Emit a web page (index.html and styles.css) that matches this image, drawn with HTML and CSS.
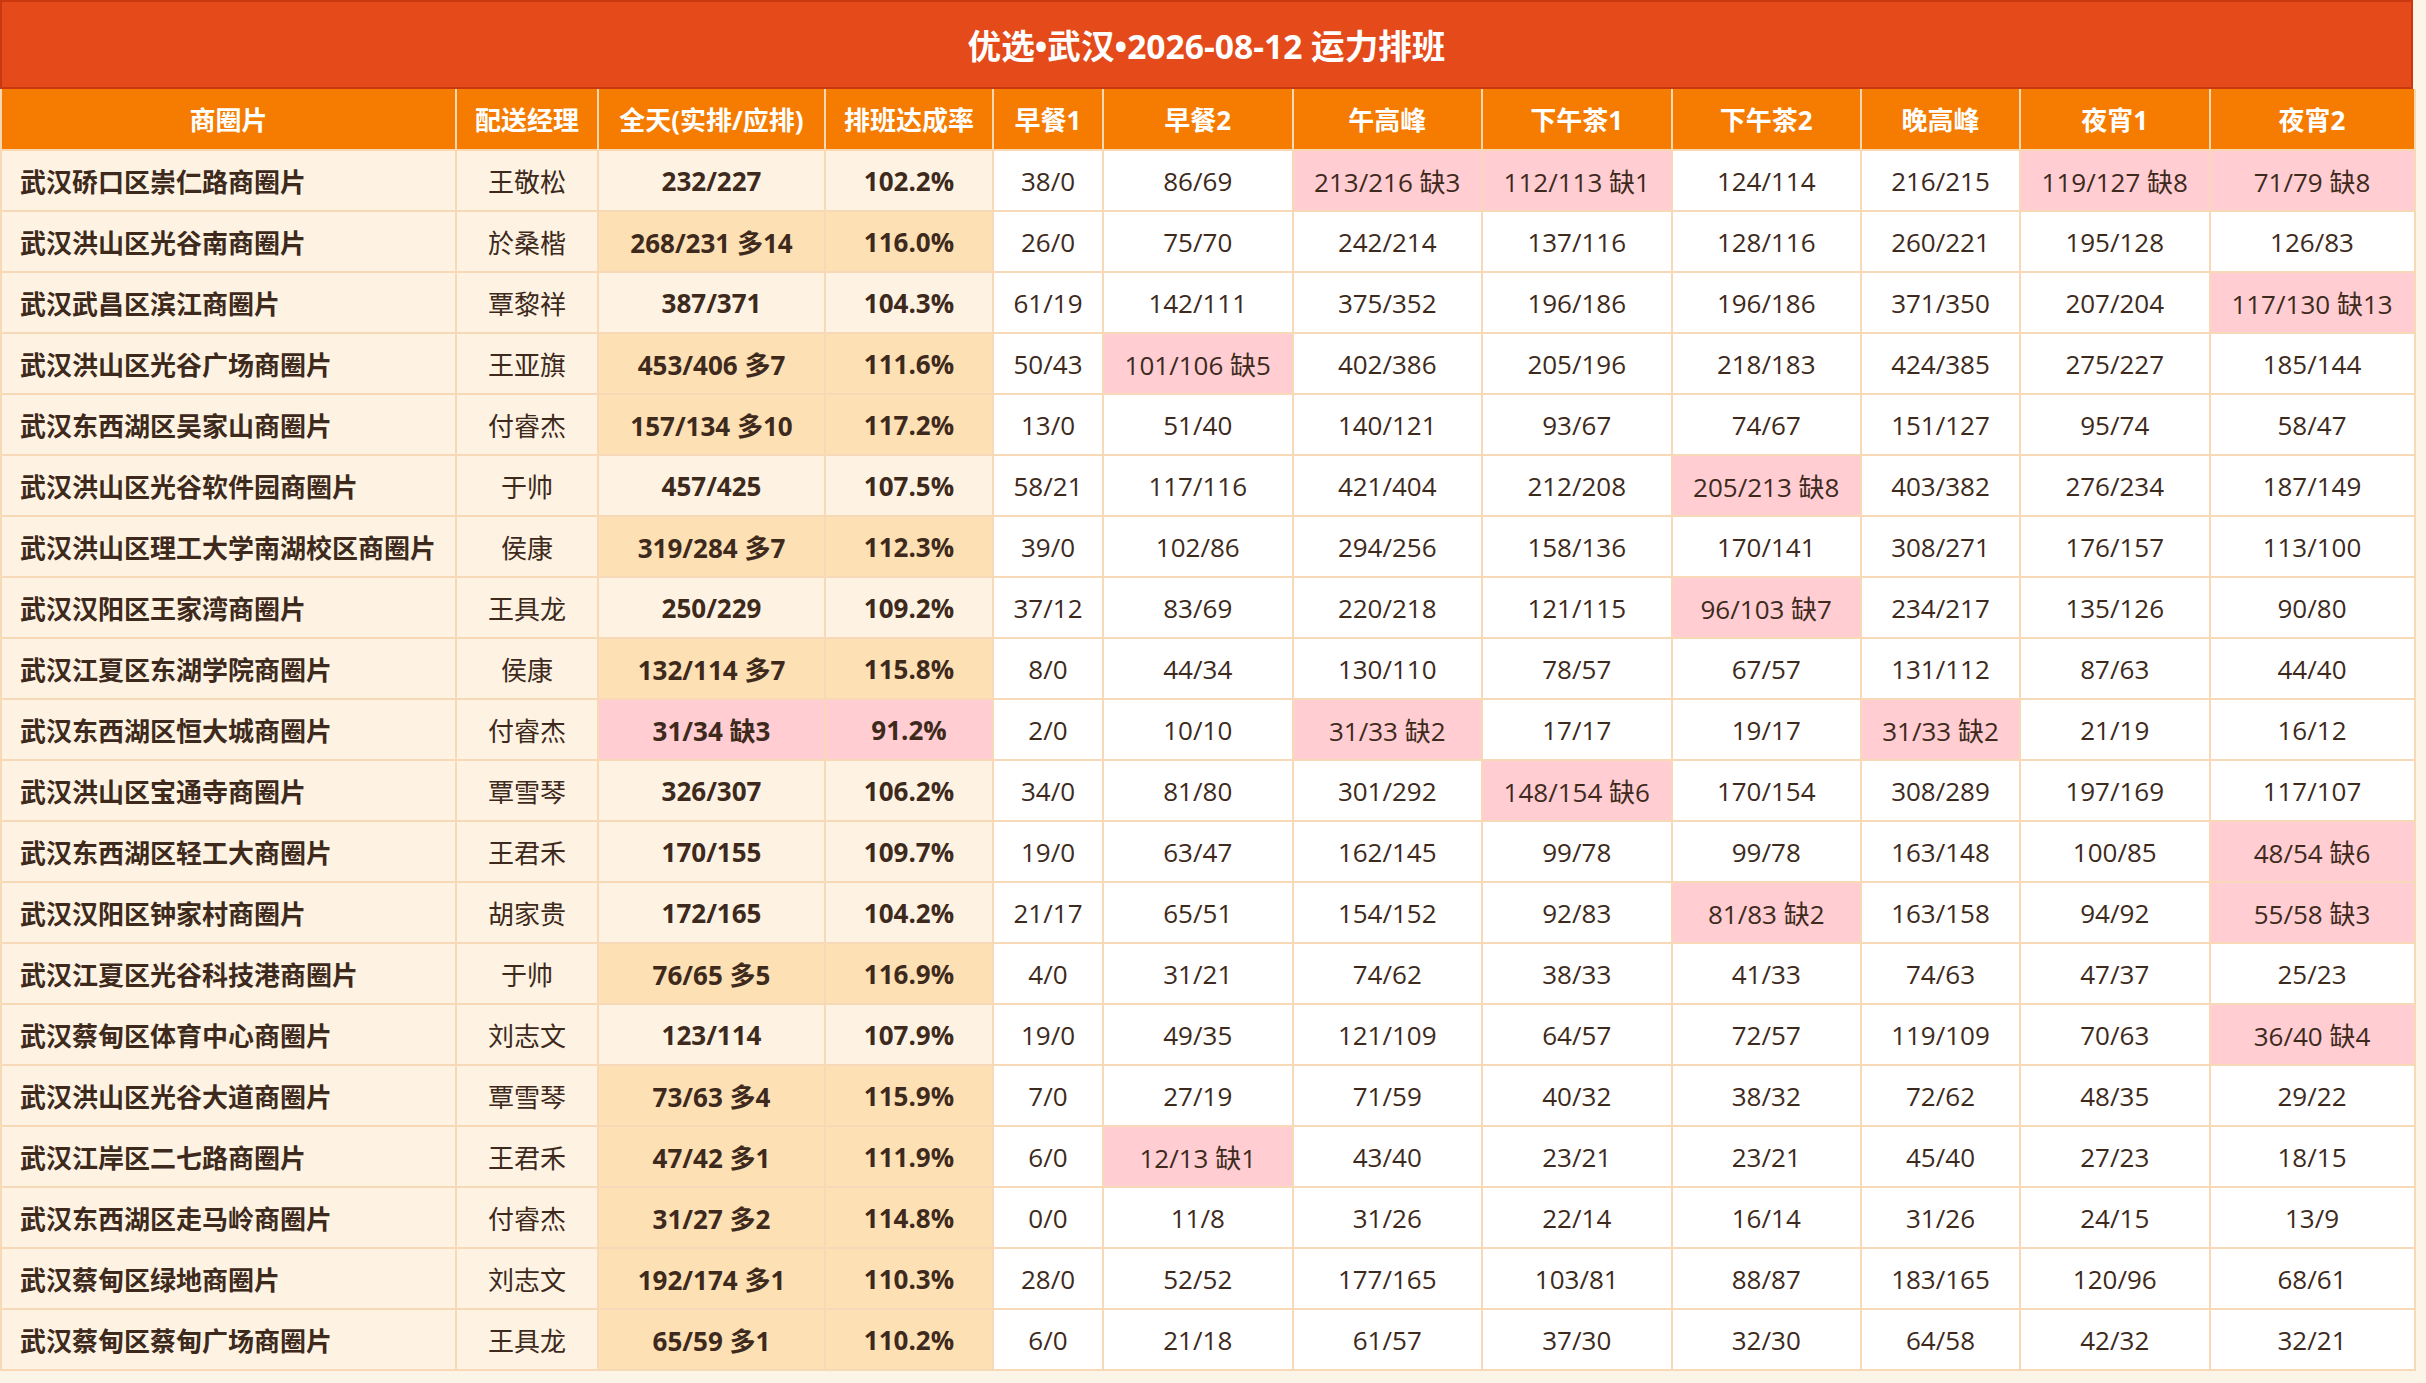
FILE: index.html
```html
<!DOCTYPE html>
<html lang="zh-CN">
<head>
<meta charset="utf-8">
<title>优选•武汉•2026-08-12 运力排班</title>
<link rel="stylesheet" href="styles.css">
</head>
<body>
<div class="sheet">
  <div class="title">优选•武汉•2026-08-12 运力排班</div>
  <table class="grid">
    <colgroup>
      <col class="c-area"><col class="c-mgr"><col class="c-all"><col class="c-rate">
      <col class="c-b1"><col class="c-slot"><col class="c-slot"><col class="c-slot">
      <col class="c-slot"><col class="c-eve"><col class="c-slot"><col class="c-last">
    </colgroup>
    <thead>
      <tr>
        <th>商圈片</th><th>配送经理</th><th>全天(实排/应排)</th><th>排班达成率</th>
        <th>早餐1</th><th>早餐2</th><th>午高峰</th><th>下午茶1</th><th>下午茶2</th>
        <th>晚高峰</th><th>夜宵1</th><th>夜宵2</th>
      </tr>
    </thead>
    <tbody>
      <tr><td class="area">武汉硚口区崇仁路商圈片</td><td class="mgr">王敬松</td><td class="all">232/227</td><td class="rate">102.2%</td><td>38/0</td><td>86/69</td><td class="bad">213/216 缺3</td><td class="bad">112/113 缺1</td><td>124/114</td><td>216/215</td><td class="bad">119/127 缺8</td><td class="bad">71/79 缺8</td></tr>
      <tr><td class="area">武汉洪山区光谷南商圈片</td><td class="mgr">於桑楷</td><td class="all over">268/231 多14</td><td class="rate over">116.0%</td><td>26/0</td><td>75/70</td><td>242/214</td><td>137/116</td><td>128/116</td><td>260/221</td><td>195/128</td><td>126/83</td></tr>
      <tr><td class="area">武汉武昌区滨江商圈片</td><td class="mgr">覃黎祥</td><td class="all">387/371</td><td class="rate">104.3%</td><td>61/19</td><td>142/111</td><td>375/352</td><td>196/186</td><td>196/186</td><td>371/350</td><td>207/204</td><td class="bad">117/130 缺13</td></tr>
      <tr><td class="area">武汉洪山区光谷广场商圈片</td><td class="mgr">王亚旗</td><td class="all over">453/406 多7</td><td class="rate over">111.6%</td><td>50/43</td><td class="bad">101/106 缺5</td><td>402/386</td><td>205/196</td><td>218/183</td><td>424/385</td><td>275/227</td><td>185/144</td></tr>
      <tr><td class="area">武汉东西湖区吴家山商圈片</td><td class="mgr">付睿杰</td><td class="all over">157/134 多10</td><td class="rate over">117.2%</td><td>13/0</td><td>51/40</td><td>140/121</td><td>93/67</td><td>74/67</td><td>151/127</td><td>95/74</td><td>58/47</td></tr>
      <tr><td class="area">武汉洪山区光谷软件园商圈片</td><td class="mgr">于帅</td><td class="all">457/425</td><td class="rate">107.5%</td><td>58/21</td><td>117/116</td><td>421/404</td><td>212/208</td><td class="bad">205/213 缺8</td><td>403/382</td><td>276/234</td><td>187/149</td></tr>
      <tr><td class="area">武汉洪山区理工大学南湖校区商圈片</td><td class="mgr">侯康</td><td class="all over">319/284 多7</td><td class="rate over">112.3%</td><td>39/0</td><td>102/86</td><td>294/256</td><td>158/136</td><td>170/141</td><td>308/271</td><td>176/157</td><td>113/100</td></tr>
      <tr><td class="area">武汉汉阳区王家湾商圈片</td><td class="mgr">王具龙</td><td class="all">250/229</td><td class="rate">109.2%</td><td>37/12</td><td>83/69</td><td>220/218</td><td>121/115</td><td class="bad">96/103 缺7</td><td>234/217</td><td>135/126</td><td>90/80</td></tr>
      <tr><td class="area">武汉江夏区东湖学院商圈片</td><td class="mgr">侯康</td><td class="all over">132/114 多7</td><td class="rate over">115.8%</td><td>8/0</td><td>44/34</td><td>130/110</td><td>78/57</td><td>67/57</td><td>131/112</td><td>87/63</td><td>44/40</td></tr>
      <tr><td class="area">武汉东西湖区恒大城商圈片</td><td class="mgr">付睿杰</td><td class="all bad">31/34 缺3</td><td class="rate bad">91.2%</td><td>2/0</td><td>10/10</td><td class="bad">31/33 缺2</td><td>17/17</td><td>19/17</td><td class="bad">31/33 缺2</td><td>21/19</td><td>16/12</td></tr>
      <tr><td class="area">武汉洪山区宝通寺商圈片</td><td class="mgr">覃雪琴</td><td class="all">326/307</td><td class="rate">106.2%</td><td>34/0</td><td>81/80</td><td>301/292</td><td class="bad">148/154 缺6</td><td>170/154</td><td>308/289</td><td>197/169</td><td>117/107</td></tr>
      <tr><td class="area">武汉东西湖区轻工大商圈片</td><td class="mgr">王君禾</td><td class="all">170/155</td><td class="rate">109.7%</td><td>19/0</td><td>63/47</td><td>162/145</td><td>99/78</td><td>99/78</td><td>163/148</td><td>100/85</td><td class="bad">48/54 缺6</td></tr>
      <tr><td class="area">武汉汉阳区钟家村商圈片</td><td class="mgr">胡家贵</td><td class="all">172/165</td><td class="rate">104.2%</td><td>21/17</td><td>65/51</td><td>154/152</td><td>92/83</td><td class="bad">81/83 缺2</td><td>163/158</td><td>94/92</td><td class="bad">55/58 缺3</td></tr>
      <tr><td class="area">武汉江夏区光谷科技港商圈片</td><td class="mgr">于帅</td><td class="all over">76/65 多5</td><td class="rate over">116.9%</td><td>4/0</td><td>31/21</td><td>74/62</td><td>38/33</td><td>41/33</td><td>74/63</td><td>47/37</td><td>25/23</td></tr>
      <tr><td class="area">武汉蔡甸区体育中心商圈片</td><td class="mgr">刘志文</td><td class="all">123/114</td><td class="rate">107.9%</td><td>19/0</td><td>49/35</td><td>121/109</td><td>64/57</td><td>72/57</td><td>119/109</td><td>70/63</td><td class="bad">36/40 缺4</td></tr>
      <tr><td class="area">武汉洪山区光谷大道商圈片</td><td class="mgr">覃雪琴</td><td class="all over">73/63 多4</td><td class="rate over">115.9%</td><td>7/0</td><td>27/19</td><td>71/59</td><td>40/32</td><td>38/32</td><td>72/62</td><td>48/35</td><td>29/22</td></tr>
      <tr><td class="area">武汉江岸区二七路商圈片</td><td class="mgr">王君禾</td><td class="all over">47/42 多1</td><td class="rate over">111.9%</td><td>6/0</td><td class="bad">12/13 缺1</td><td>43/40</td><td>23/21</td><td>23/21</td><td>45/40</td><td>27/23</td><td>18/15</td></tr>
      <tr><td class="area">武汉东西湖区走马岭商圈片</td><td class="mgr">付睿杰</td><td class="all over">31/27 多2</td><td class="rate over">114.8%</td><td>0/0</td><td>11/8</td><td>31/26</td><td>22/14</td><td>16/14</td><td>31/26</td><td>24/15</td><td>13/9</td></tr>
      <tr><td class="area">武汉蔡甸区绿地商圈片</td><td class="mgr">刘志文</td><td class="all over">192/174 多1</td><td class="rate over">110.3%</td><td>28/0</td><td>52/52</td><td>177/165</td><td>103/81</td><td>88/87</td><td>183/165</td><td>120/96</td><td>68/61</td></tr>
      <tr><td class="area">武汉蔡甸区蔡甸广场商圈片</td><td class="mgr">王具龙</td><td class="all over">65/59 多1</td><td class="rate over">110.2%</td><td>6/0</td><td>21/18</td><td>61/57</td><td>37/30</td><td>32/30</td><td>64/58</td><td>42/32</td><td>32/21</td></tr>
    </tbody>
  </table>
</div>
</body>
</html>
```

FILE: styles.css
```css
html, body {
  margin: 0;
  padding: 0;
  background: #fdf4e8;
}

body {
  font-family: "Open Sans", "Noto Sans CJK SC", sans-serif;
  color: #3d2a1c;
}

.sheet {
  width: 2413px;
}

.title {
  box-sizing: border-box;
  height: 89px;
  background: #e54a1a;
  border: 2px solid #c9380f;
  color: #ffffff;
  font-size: 33.6px;
  font-weight: 700;
  display: flex;
  align-items: center;
  justify-content: center;
  letter-spacing: 0;
}

.grid {
  width: 2413px;
  table-layout: fixed;
  border-collapse: collapse;
  font-size: 26px;
}

.c-area { width: 455px; }
.c-mgr { width: 142px; }
.c-all { width: 227px; }
.c-rate { width: 168px; }
.c-b1 { width: 110px; }
.c-slot { width: 189.5px; }
.c-eve { width: 159px; }
.c-last { width: 205px; }

.grid th {
  height: 60px;
  padding: 0;
  background: #f57c00;
  color: #ffffff;
  font-weight: 700;
  text-align: center;
  border: 2px solid #f7d8b3;
  border-top: none;
  white-space: nowrap;
}

.grid td {
  height: 61px;
  padding: 0;
  box-sizing: border-box;
  background: #ffffff;
  text-align: center;
  border: 2px solid #f7d8b7;
  white-space: nowrap;
  font-weight: 400;
}

.grid td.area {
  background: #fef3e3;
  text-align: left;
  padding-left: 18px;
  font-weight: 700;
}

.grid td.mgr {
  background: #fef3e3;
}

.grid td.all,
.grid td.rate {
  background: #fef3e3;
  font-weight: 700;
}

.grid td.over {
  background: #fee0b5;
}

.grid td.bad {
  background: #ffcdd2;
}
```
